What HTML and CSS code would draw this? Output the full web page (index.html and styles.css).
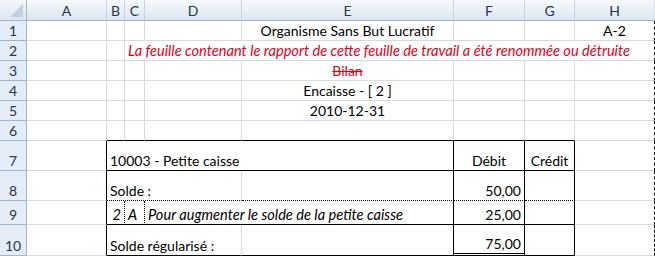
FILE: index.html
```html
<!DOCTYPE html>
<html lang="fr">
<head>
<meta charset="utf-8">
<title>Encaisse</title>
<link rel="stylesheet" href="styles.css">
</head>
<body>
<div class="sheet">
  <!-- header row -->
  <div class="corner"><svg class="tri" width="13" height="13" viewBox="0 0 13 13"><polygon points="13,0 13,13 0,13" fill="#c3cfdf"/></svg></div>
  <div class="ch">A</div><div class="ch">B</div><div class="ch">C</div><div class="ch">D</div><div class="ch">E</div><div class="ch">F</div><div class="ch">G</div><div class="ch ch-last">H</div>

  <!-- row 1 -->
  <div class="rh">1</div>
  <div class="c"></div><div class="c"></div><div class="c"></div><div class="c"></div>
  <div class="c center">Organisme Sans But Lucratif</div>
  <div class="c"></div><div class="c"></div>
  <div class="c center pb">A-2</div>

  <!-- row 2 -->
  <div class="rh">2</div>
  <div class="c"></div><div class="c"></div>
  <div class="c span-c-h red italic pb">La feuille contenant le rapport de cette feuille de travail a été renommée ou détruite</div>

  <!-- row 3 -->
  <div class="rh">3</div>
  <div class="c"></div><div class="c"></div><div class="c"></div><div class="c"></div>
  <div class="c center red strike">Bilan</div>
  <div class="c"></div><div class="c"></div><div class="c pb"></div>

  <!-- row 4 -->
  <div class="rh">4</div>
  <div class="c"></div><div class="c"></div><div class="c"></div><div class="c"></div>
  <div class="c center">Encaisse - [ 2 ]</div>
  <div class="c"></div><div class="c"></div><div class="c pb"></div>

  <!-- row 5 -->
  <div class="rh">5</div>
  <div class="c"></div><div class="c"></div><div class="c"></div><div class="c"></div>
  <div class="c center">2010-12-31</div>
  <div class="c"></div><div class="c"></div><div class="c pb"></div>

  <!-- row 6 -->
  <div class="rh">6</div>
  <div class="c"></div>
  <div class="c b-k"></div><div class="c b-k"></div><div class="c b-k"></div><div class="c b-k"></div><div class="c b-k"></div><div class="c b-k"></div>
  <div class="c pb"></div>

  <!-- row 7 -->
  <div class="rh">7</div>
  <div class="c r-k"></div>
  <div class="c span-b-e r-k b-k">10003 - Petite caisse</div>
  <div class="c center r-k b-k">Débit</div>
  <div class="c center r-k b-k">Crédit</div>
  <div class="c pb"></div>

  <!-- row 8 -->
  <div class="rh">8</div>
  <div class="c r-k"></div>
  <div class="c span-b-d b-dot">Solde :</div>
  <div class="c r-k b-dot"></div>
  <div class="c right r-k b-dot">50,00</div>
  <div class="c r-k b-dot"></div>
  <div class="c pb"></div>

  <!-- row 9 -->
  <div class="rh">9</div>
  <div class="c r-k"></div>
  <div class="c right italic r-dot b-k">2</div>
  <div class="c italic r-dot b-k">A</div>
  <div class="c span-d-e italic r-k b-k">Pour augmenter le solde de la petite caisse</div>
  <div class="c right r-k b-k">25,00</div>
  <div class="c r-k b-k"></div>
  <div class="c pb"></div>

  <!-- row 10 -->
  <div class="rh">10</div>
  <div class="c r-k"></div>
  <div class="c span-b-d b-k">Solde régularisé :</div>
  <div class="c r-k b-k"></div>
  <div class="c right r-k b-dbl">75,00</div>
  <div class="c r-k b-k"></div>
  <div class="c pb"></div>

  <!-- row 11 (partially visible) -->
  <div class="rh"></div>
  <div class="c"></div><div class="c"></div><div class="c"></div><div class="c"></div><div class="c"></div><div class="c"></div><div class="c"></div><div class="c pb"></div>
</div>
</body>
</html>
```

FILE: styles.css
```css
* { box-sizing: border-box; }

html, body {
  margin: 0;
  padding: 0;
  background: #ffffff;
}

body {
  width: 655px;
  height: 256px;
  overflow: hidden;
  font-family: "Lato", "Open Sans", sans-serif;
  font-size: 14px;
  color: #000000;
}

.sheet {
  display: grid;
  grid-template-columns: 27px 80px 18px 20px 97px 212px 71px 50px 80px;
  grid-template-rows: 21px repeat(6, 20px) 30px 30px 24px 31px 20px;
  width: 655px;
  height: 256px;
  overflow: hidden;
}

/* header row */
.corner {
  position: relative;
  background: linear-gradient(#f4f7fb, #dde6f1);
  border-right: 1px solid #9eb6ce;
  border-bottom: 1px solid #9eb6ce;
}
.tri {
  position: absolute;
  right: 3px;
  bottom: 3px;
  display: block;
}

.ch {
  display: flex;
  align-items: center;
  justify-content: center;
  background: linear-gradient(#f6f9fc 0%, #e9eff6 50%, #dce5f0 100%);
  border-right: 1px solid #c6d3e2;
  border-bottom: 1px solid #9eb6ce;
  color: #27364a;
  font-size: 14px;
  line-height: 1;
  padding-top: 2px;
}
.ch-last { border-right: 1px solid #d8e1ec; }

/* row headers */
.rh {
  display: flex;
  align-items: flex-end;
  justify-content: center;
  background: #e4ecf7;
  border-right: 1px solid #9eb6ce;
  border-bottom: 1px solid #9eb6ce;
  color: #27364a;
  line-height: 16px;
  padding-bottom: 1px;
}

/* cells */
.c {
  display: flex;
  align-items: flex-end;
  white-space: nowrap;
  border-right: 1px solid #d6dbe3;
  border-bottom: 1px solid #d6dbe3;
  padding: 0 3px 1px 3px;
  line-height: 17px;
  min-width: 0;
}

.center { justify-content: center; }
.right { justify-content: flex-end; }
.italic { font-style: italic; font-size: 14.6px; }
.red { color: #e40018; }
.strike { text-decoration: line-through; }

.span-c-h { grid-column: 4 / 10; }
.span-b-e { grid-column: 3 / 7; }
.span-b-d { grid-column: 3 / 6; }
.span-d-e { grid-column: 5 / 7; }

.r-k { border-right: 1px solid #000000; }
.b-k { border-bottom: 1px solid #000000; }
.b-dot { border-bottom: 1px dotted #000000; }
.r-dot { border-right: 1px dotted #000000; }
.b-dbl { border-bottom: 3px double #000000; }
.pb { border-right: 1px dashed #000000; }
```
